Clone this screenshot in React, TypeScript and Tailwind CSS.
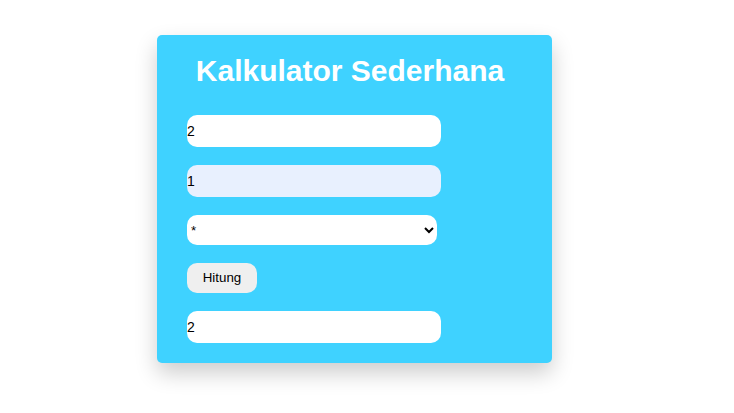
import { useState } from 'react'

export default function App() {
  const [a, setA] = useState('2')
  const [b, setB] = useState('1')
  const [op, setOp] = useState('*')
  const [hasil, setHasil] = useState('2')

  const hitung = () => {
    const x = parseFloat(a)
    const y = parseFloat(b)
    let r = 0
    if (op === '+') r = x + y
    else if (op === '-') r = x - y
    else if (op === '*') r = x * y
    else r = x / y
    setHasil(String(r))
  }

  return (
    <div className="min-h-screen bg-white pt-[35px] pl-[157px] font-['Liberation_Sans',Arial,sans-serif]">
      <div className="w-[395px] rounded-[5px] bg-[#3fd2ff] pt-[19px] pb-[20px] pl-[30px] shadow-[0_10px_22px_rgba(0,0,0,0.2)]">
        <h2 className="pr-[39px] text-center text-[30px] leading-[34px] font-bold text-white">
          Kalkulator Sederhana
        </h2>

        <div className="mt-[27px] flex flex-col items-start gap-[18px] text-[13.33px] text-black">
          <input
            type="text"
            value={a}
            onChange={(e) => setA(e.target.value)}
            className="h-[32px] w-[254px] rounded-[10px] bg-white text-[14px] outline-none"
          />
          <input
            type="text"
            value={b}
            onChange={(e) => setB(e.target.value)}
            className="h-[32px] w-[254px] rounded-[10px] bg-[#e8f0fe] text-[14px] outline-none"
          />
          <select
            value={op}
            onChange={(e) => setOp(e.target.value)}
            className="h-[30px] w-[250px] rounded-[10px] bg-white outline-none"
          >
            <option value="+">+</option>
            <option value="-">-</option>
            <option value="*">*</option>
            <option value="/">/</option>
          </select>
          <button
            onClick={hitung}
            className="h-[30px] w-[70px] rounded-[10px] bg-[#efefef] text-center"
          >
            Hitung
          </button>
          <input
            type="text"
            value={hasil}
            readOnly
            className="h-[32px] w-[254px] rounded-[10px] bg-white text-[14px] outline-none"
          />
        </div>
      </div>
    </div>
  )
}
